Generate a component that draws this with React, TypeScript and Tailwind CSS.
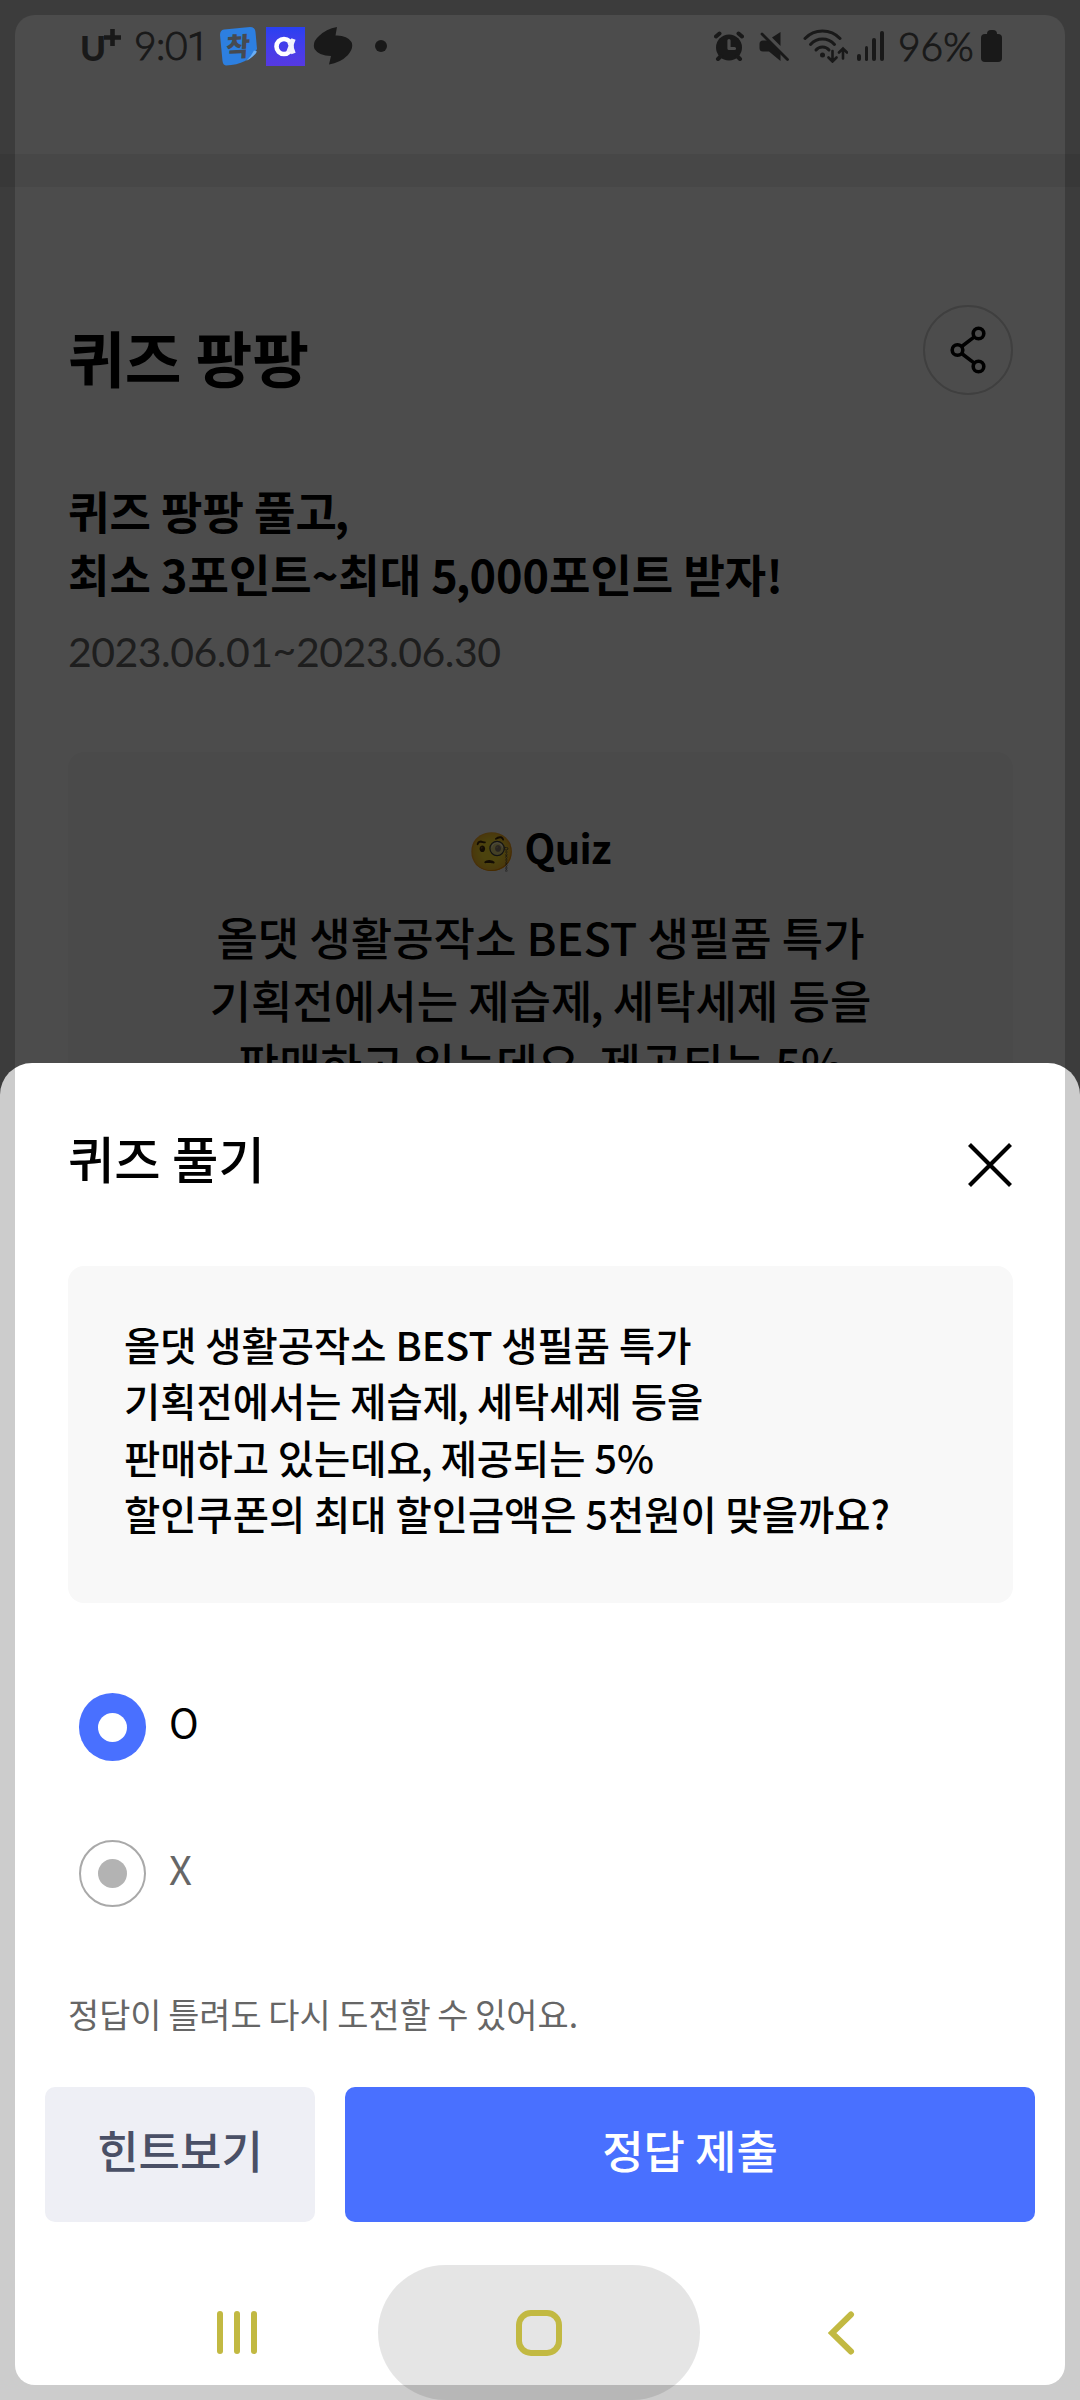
import type { ReactNode } from "react";

function StatusBar() {
  return (
    <div className="absolute inset-x-0 top-0 flex h-[92px] items-center justify-between pl-[80px] pr-[78px] text-[#191919]">
      <div className="flex h-full items-center">
        <div className="flex h-full w-[54px] items-start font-['Lato',sans-serif] font-black">
          <span className="mt-[27px] w-[24px] text-[35px] leading-[40px]">U</span>
          <svg className="mt-[29px]" width="17" height="17" viewBox="0 0 17 17" stroke="currentColor" strokeWidth="4.600">
            <path d="M8.500 0 V17 M0 8.500 H17" />
          </svg>
        </div>
        <span className="w-[84px] font-['Lato',sans-serif] text-[39px] font-light leading-[40px] tracking-[-0.5px] [-webkit-text-stroke:1px]">
          9:0<span className="font-['Roboto',sans-serif]">1</span>
        </span>
        <div className="relative mr-2 flex h-[40px] w-[40px] items-center justify-center">
          <svg className="absolute inset-0" width="40" height="40" viewBox="0 0 40 40">
            <path d="M6 3.500 L32 1 Q37 1 37.500 6 L39 23 Q35 30 27 35 Q19 39 8 39.500 Q5 39 4.500 35 L2 9 Q2 4 6 3.500Z" fill="#2d7fe0" />
            <path d="M28 35 Q33 31 36 24.500 L39 25.500 Q36 31 28 35Z" fill="#6aaef5" />
          </svg>
          <span className="relative -mt-[3px] -rotate-3 -skew-x-6 font-['Noto_Sans_CJK_KR',sans-serif] text-[26px] font-black leading-none text-[#464a50]">착</span>
        </div>
        <div className="mr-2 flex h-[39px] w-[39px] items-center justify-center bg-gradient-to-b from-[#2940f2] to-[#5639e2]">
          <svg width="39" height="39" viewBox="0 0 39 39" fill="none">
            <circle cx="18" cy="19.500" r="7.500" stroke="#fff" strokeWidth="4.600" />
            <path d="M27.500 12 L22.500 25 M23.500 15 L27.500 26.500" stroke="#f1f1fb" strokeWidth="4.500" />
          </svg>
        </div>
        <svg width="40" height="40" viewBox="0 0 40 40" fill="currentColor">
          <path d="M24 1 L22.500 9.500 Q34 9 38.500 16 Q41 22 35 29 Q27 37 16 38.500 L18 30 Q6 30 1.500 23 Q-1 16 6 10 Q13 3 24 1Z" />
        </svg>
        <div className="ml-[22px] h-3 w-3 rounded-full bg-current" />
      </div>
      <div className="flex h-full items-center">
        <svg className="mr-[15px]" width="30" height="30" viewBox="0 0 30 30" fill="none" stroke="currentColor">
          <circle cx="15" cy="16.500" r="13" fill="currentColor" stroke="none" />
          <path d="M2 5.500 L5.500 2.500 M28 5.500 L24.500 2.500 M4 28 L7 25 M26 28 L23 25" strokeWidth="4" strokeLinecap="round" />
          <path d="M15 9.500 V17.500 H20.500" stroke="#4c4c4c" strokeWidth="3.200" strokeLinecap="round" strokeLinejoin="round" />
        </svg>
        <svg className="mr-[14px]" width="30" height="30" viewBox="0 0 30 30" fill="currentColor">
          <path d="M21.500 1 V15 L13 6.500Z" />
          <path d="M4 9.500 H9 L21.500 22 V30 L10 20.500 H4 Q0.500 20.500 0.500 17 V13 Q0.500 9.500 4 9.500Z" />
          <path d="M3 3 L28.500 28.500" stroke="currentColor" strokeWidth="2.800" strokeLinecap="round" />
        </svg>
        <svg className="mr-[9px]" width="45" height="34" viewBox="0 0 45 34" fill="none" stroke="currentColor" strokeLinecap="round">
          <path d="M2 9.500 Q9 2 19.500 2 Q30 2 37 9.500" strokeWidth="3" />
          <path d="M7.500 15.500 Q12.500 10 19.500 10 Q26.500 10 31.500 15.500" strokeWidth="3" />
          <path d="M13 21 Q15.500 18 19.500 18 Q23.500 18 26 21" strokeWidth="3" />
          <circle cx="19.500" cy="26" r="2.500" fill="currentColor" stroke="none" />
          <path d="M29.500 22 V32 M25.500 28.500 L29.500 32.500 L33.500 28.500 M40 29.500 V20 M36 23.500 L40 19.500 L44 23.500" strokeWidth="2.600" />
        </svg>
        <div className="mr-[14px] flex h-[30px] items-end gap-1">
          <div className="h-[7px] w-1 rounded-full bg-current" />
          <div className="h-[15px] w-[3px] rounded-full bg-current" />
          <div className="h-[23px] w-1 rounded-full bg-current" />
          <div className="h-[30px] w-1 rounded-full bg-current" />
        </div>
        <span className="w-[83px] whitespace-nowrap font-['Lato',sans-serif] text-[39px] font-light leading-[40px] [-webkit-text-stroke:1px]">
          96%
        </span>
        <div className="flex w-[21px] flex-col items-center">
          <div className="h-1 w-[10px] rounded-t-sm bg-current" />
          <div className="h-[28px] w-[21px] rounded bg-current" />
        </div>
      </div>
    </div>
  );
}

function ShareIcon() {
  return (
    <svg width="36" height="48" viewBox="0 0 36 48" fill="none" stroke="black" strokeWidth="3.600">
      <circle cx="28.500" cy="7.500" r="5.300" />
      <circle cx="7.500" cy="24" r="5.300" />
      <circle cx="28.500" cy="40.500" r="5.300" />
      <path d="M11.700 20.500 L24.300 10.900 M11.700 27.500 L24.300 37.100" />
    </svg>
  );
}

/* Comma set closer to the preceding glyph */
function Comma() {
  return <span className="-ml-[0.05em] tracking-[-0.02em]">,</span>;
}

function EventPage() {
  return (
    <main className="h-full w-full bg-white pt-[154px] text-black">
      <div className="h-[33px] bg-[#ededed]" />
      <div className="pl-[68px] pr-[67px] pt-[118px]">
        <header className="flex h-[90px] items-center justify-between">
          <h1 className="pt-[11px] text-[61.7px] font-bold leading-[90px]">퀴즈 팡팡</h1>
          <button className="flex h-[90px] w-[90px] items-center justify-center rounded-full border-2 border-[#d2d2d2]">
            <ShareIcon />
          </button>
        </header>
        <p className="mt-[84px] text-[45px] font-bold leading-[63px]">
          퀴즈 팡팡 풀고
          <Comma />
          <br />
          최소 3포인트~최대 5<Comma />
          000포인트 받자!
        </p>
        <p className="mt-[18px] font-['Lato',sans-serif] text-[41px] leading-[57px] tracking-[-0.5px] text-[#666]">
          2023.06.01<span className="inline-block -translate-y-[3px]">~</span>2023.06.30
        </p>
        <section className="mt-[72px] h-[600px] rounded-2xl bg-[#f7f7f7] pt-[64px] text-center">
          <h2 className="flex h-[62px] items-center justify-center gap-[10px] pr-[2px] text-[40px] font-bold tracking-[-0.7px]">
            <span className="pt-[2px] text-[38px] font-normal">🧐</span>
            <span>Quiz</span>
          </h2>
          <p className="mt-[27px] text-[45px] font-medium leading-[63px]">
            올댓 생활공작소 BEST 생필품 특가
            <br />
            기획전에서는 제습제
            <Comma /> 세탁세제 등을
            <br />
            판매하고 있는데요
            <Comma /> 제공되는 5%
          </p>
        </section>
      </div>
    </main>
  );
}

function Radio({ checked, children }: { checked: boolean; children: ReactNode }) {
  return (
    <label className="flex h-[68px] items-center gap-[23px]">
      <span
        className={
          checked
            ? "flex h-[68px] w-[67px] items-center justify-center rounded-full bg-[#4970ff]"
            : "flex h-[67px] w-[67px] items-center justify-center rounded-full border-2 border-[#a9a9a9]"
        }
      >
        <span className={checked ? "h-[29px] w-[29px] rounded-full bg-white" : "h-[29px] w-[29px] rounded-full bg-[#b3b3b3]"} />
      </span>
      <span className={checked ? "-mt-[12px] text-[40px] leading-[56px] text-black" : "-mt-[11px] text-[40px] leading-[56px] text-[#666]"}>
        {children}
      </span>
    </label>
  );
}

function QuizSheet() {
  return (
    <section className="absolute inset-x-0 bottom-0 top-[1063px] flex flex-col rounded-t-[32px] bg-white text-black">
      <header className="flex h-[203px] items-start justify-between pl-[68px] pr-[68px]">
        <h2 className="mt-[60px] text-[50.4px] font-medium leading-[70px]">퀴즈 풀기</h2>
        <svg className="mt-[80px]" width="44" height="44" viewBox="0 0 44 44" stroke="black" strokeWidth="4.200">
          <path d="M1.500 1.500 L42.500 42.500 M42.500 1.500 L1.500 42.500" />
        </svg>
      </header>
      <div className="ml-[68px] mr-[67px] h-[337px] rounded-2xl bg-[#f8f8f8] pl-[56px] pt-[50px] text-[39.4px] font-medium leading-[56.400px]">
        올댓 생활공작소 BEST 생필품 특가
        <br />
        기획전에서는 제습제
        <Comma /> 세탁세제 등을
        <br />
        판매하고 있는데요
        <Comma /> 제공되는 5%
        <br />
        할인쿠폰의 최대 할인금액은 5천원이 맞을까요?
      </div>
      <div className="mt-[90px] flex flex-col gap-[78px] pl-[79px]">
        <Radio checked>O</Radio>
        <Radio checked={false}>X</Radio>
      </div>
      <p className="mt-[83px] h-[48px] px-[68px] text-[33.9px] leading-[48px] text-[#666] [word-spacing:-1px]">
        정답이 틀려도 다시 도전할 수 있어요.
      </p>
      <div className="mt-[49px] flex h-[135px] gap-[30px] px-[45px] text-[45px] font-medium leading-[63px]">
        <button className="w-[270px] rounded-[10px] bg-[#eeeff5] pb-[11px] text-[#4a5066]">힌트보기</button>
        <button className="flex-1 rounded-[10px] bg-[#4970ff] pb-[11px] text-white">정답 제출</button>
      </div>
    </section>
  );
}

function NavBar() {
  return (
    <nav className="absolute inset-x-0 bottom-0 flex h-[135px] items-center text-[#c2b942]">
      <div className="flex w-[378px] items-center gap-[11px] pl-[217px]">
        <div className="h-[43px] w-[6px] rounded-full bg-current" />
        <div className="h-[43px] w-[6px] rounded-full bg-current" />
        <div className="h-[43px] w-[6px] rounded-full bg-current" />
      </div>
      <div className="flex h-[135px] w-[322px] items-center justify-center rounded-full bg-black/10">
        <div className="h-[46px] w-[46px] rounded-[15px] border-[6px] border-current" />
      </div>
      <svg className="ml-[128px]" width="27" height="44" viewBox="0 0 27 44" fill="none" stroke="currentColor" strokeWidth="6" strokeLinecap="round">
        <path d="M23 3.500 L4 22 L23 40.500" />
      </svg>
    </nav>
  );
}

export default function App() {
  return (
    <div className="relative h-[2400px] w-[1080px] overflow-hidden bg-white font-['Noto_Sans_CJK_KR',sans-serif]">
      <EventPage />
      <div className="absolute inset-0 bg-black/70" />
      <StatusBar />
      <QuizSheet />
      <div className="pointer-events-none absolute inset-[15px] rounded-[20px] shadow-[0_0_0_60px_rgba(0,0,0,0.2)]" />
      <NavBar />
    </div>
  );
}
